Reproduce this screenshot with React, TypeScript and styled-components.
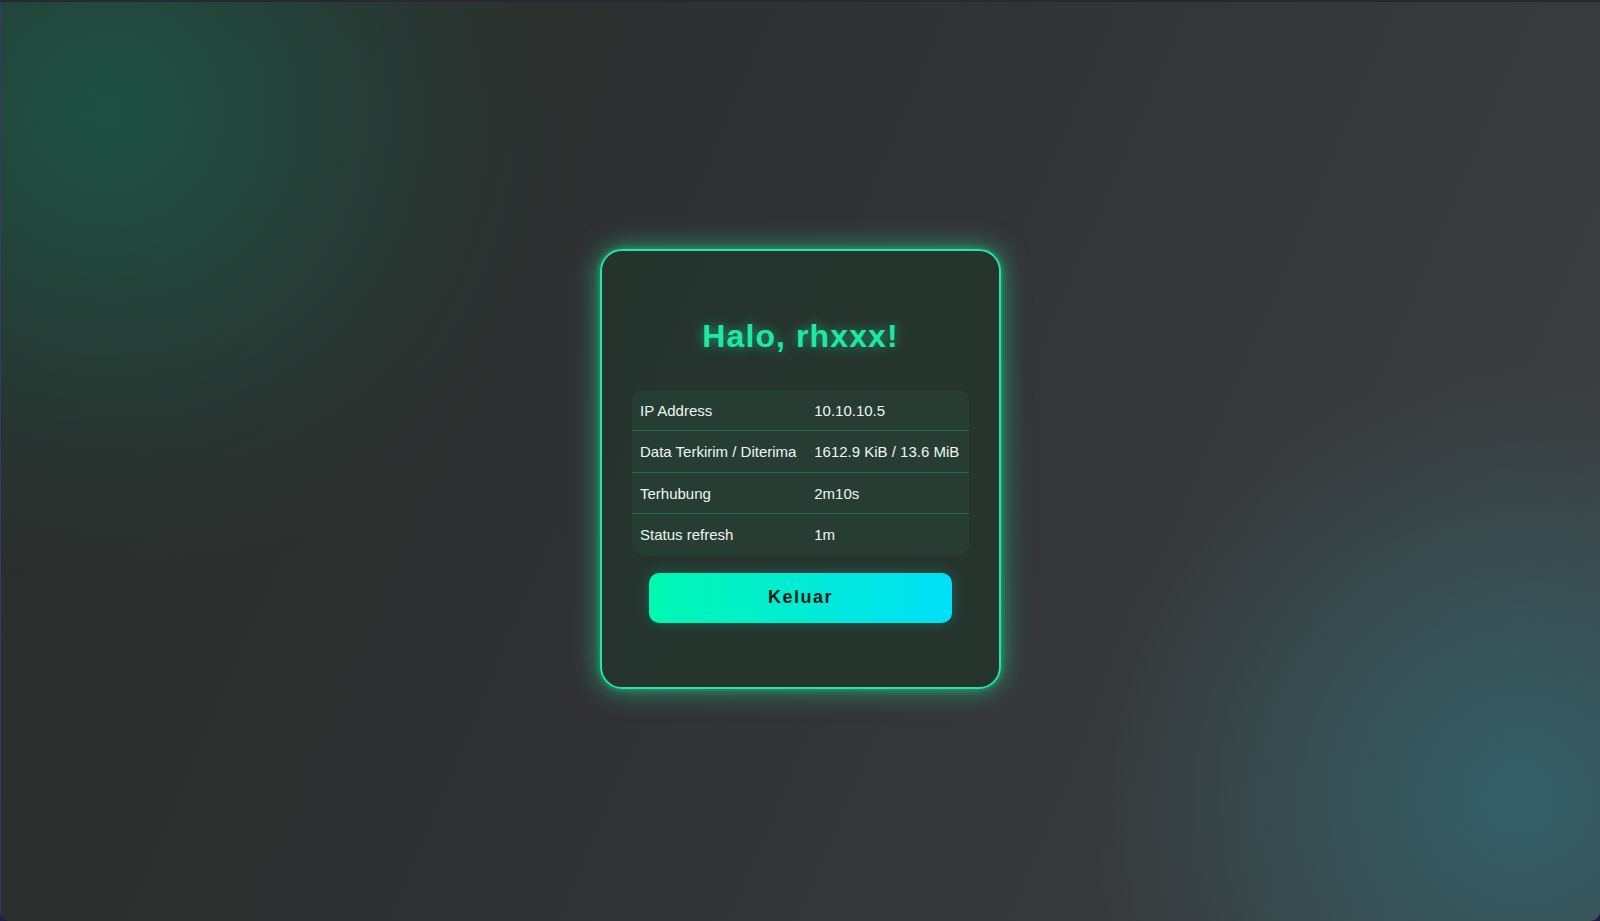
import React from "react";
import styled, { createGlobalStyle } from "styled-components";

const GlobalStyle = createGlobalStyle`
  html, body {
    margin: 0;
    padding: 0;
    background: #221c46;
    font-family: "Liberation Sans", Arial, Helvetica, sans-serif;
  }
  * { box-sizing: border-box; }
`;

const Frame = styled.div`
  height: 921px;
  border-top: 2px solid #29272f;
  border-left: 1px solid #35347c;
  border-radius: 0 0 10px 10px;
  overflow: hidden;
  display: flex;
  align-items: center;
  justify-content: center;
  padding-top: 14px;
  background:
    radial-gradient(circle 480px at 106px 110px, rgba(30, 82, 66, 1) 0%, rgba(30, 82, 66, 0.62) 35%, rgba(30, 82, 66, 0.22) 70%, rgba(30, 82, 66, 0) 100%),
    radial-gradient(circle 430px at 1518px 796px, rgba(52, 96, 104, 1) 0%, rgba(52, 96, 104, 0.6) 40%, rgba(52, 96, 104, 0) 100%),
    linear-gradient(113deg, #2a2b2b 0%, #2d2e2e 25%, #303132 40%, #333435 55%, #38393a 75%, #3f3f40 100%);
`;

const Card = styled.div`
  width: 401px;
  padding: 40px 30px;
  border: 2px solid #1de9a3;
  border-radius: 22px;
  background: rgba(37, 52, 45, 0.9);
  box-shadow: 0 0 28px rgba(29, 233, 163, 0.6), 0 0 6px rgba(29, 233, 163, 0.5);
  display: flex;
  flex-direction: column;
  align-items: center;
`;

const Title = styled.h1`
  margin: 27px 0 35px;
  font-size: 32px;
  line-height: 37px;
  font-weight: 700;
  letter-spacing: 1.1px;
  color: #1de9a3;
  text-shadow: 0 0 12px rgba(29, 233, 163, 0.6);
`;

const InfoTable = styled.table`
  width: 100%;
  border-collapse: collapse;
  border-radius: 10px;
  overflow: hidden;
  background: rgba(40, 70, 58, 0.55);
`;

const Row = styled.tr<{ $last?: boolean }>`
  border-bottom: ${(p) => (p.$last ? "none" : "1px solid rgba(29, 190, 140, 0.35)")};
`;

const Cell = styled.td`
  padding: 12px 8px 11.5px;
  font-size: 15px;
  line-height: 17px;
  color: #eef6f2;
  white-space: nowrap;
  text-align: left;
`;

const LogoutButton = styled.button`
  margin: 18px 0 24px;
  width: 90%;
  height: 50px;
  border: none;
  border-radius: 10px;
  background: linear-gradient(90deg, #00f8b0 0%, #00e0f8 100%);
  box-shadow: 0 0 14px rgba(0, 240, 200, 0.25);
  color: #0e1c18;
  font-family: "Liberation Sans", Arial, sans-serif;
  font-size: 18px;
  font-weight: 700;
  letter-spacing: 1.5px;
  cursor: pointer;
`;

const rows: [string, string][] = [
  ["IP Address", "10.10.10.5"],
  ["Data Terkirim / Diterima", "1612.9 KiB / 13.6 MiB"],
  ["Terhubung", "2m10s"],
  ["Status refresh", "1m"],
];

export default function App() {
  return (
    <>
      <GlobalStyle />
      <Frame>
        <Card>
          <Title>Halo, rhxxx!</Title>
          <InfoTable>
            <tbody>
              {rows.map(([k, v], i) => (
                <Row key={k} $last={i === rows.length - 1}>
                  <Cell>{k}</Cell>
                  <Cell>{v}</Cell>
                </Row>
              ))}
            </tbody>
          </InfoTable>
          <LogoutButton>Keluar</LogoutButton>
        </Card>
      </Frame>
    </>
  );
}
